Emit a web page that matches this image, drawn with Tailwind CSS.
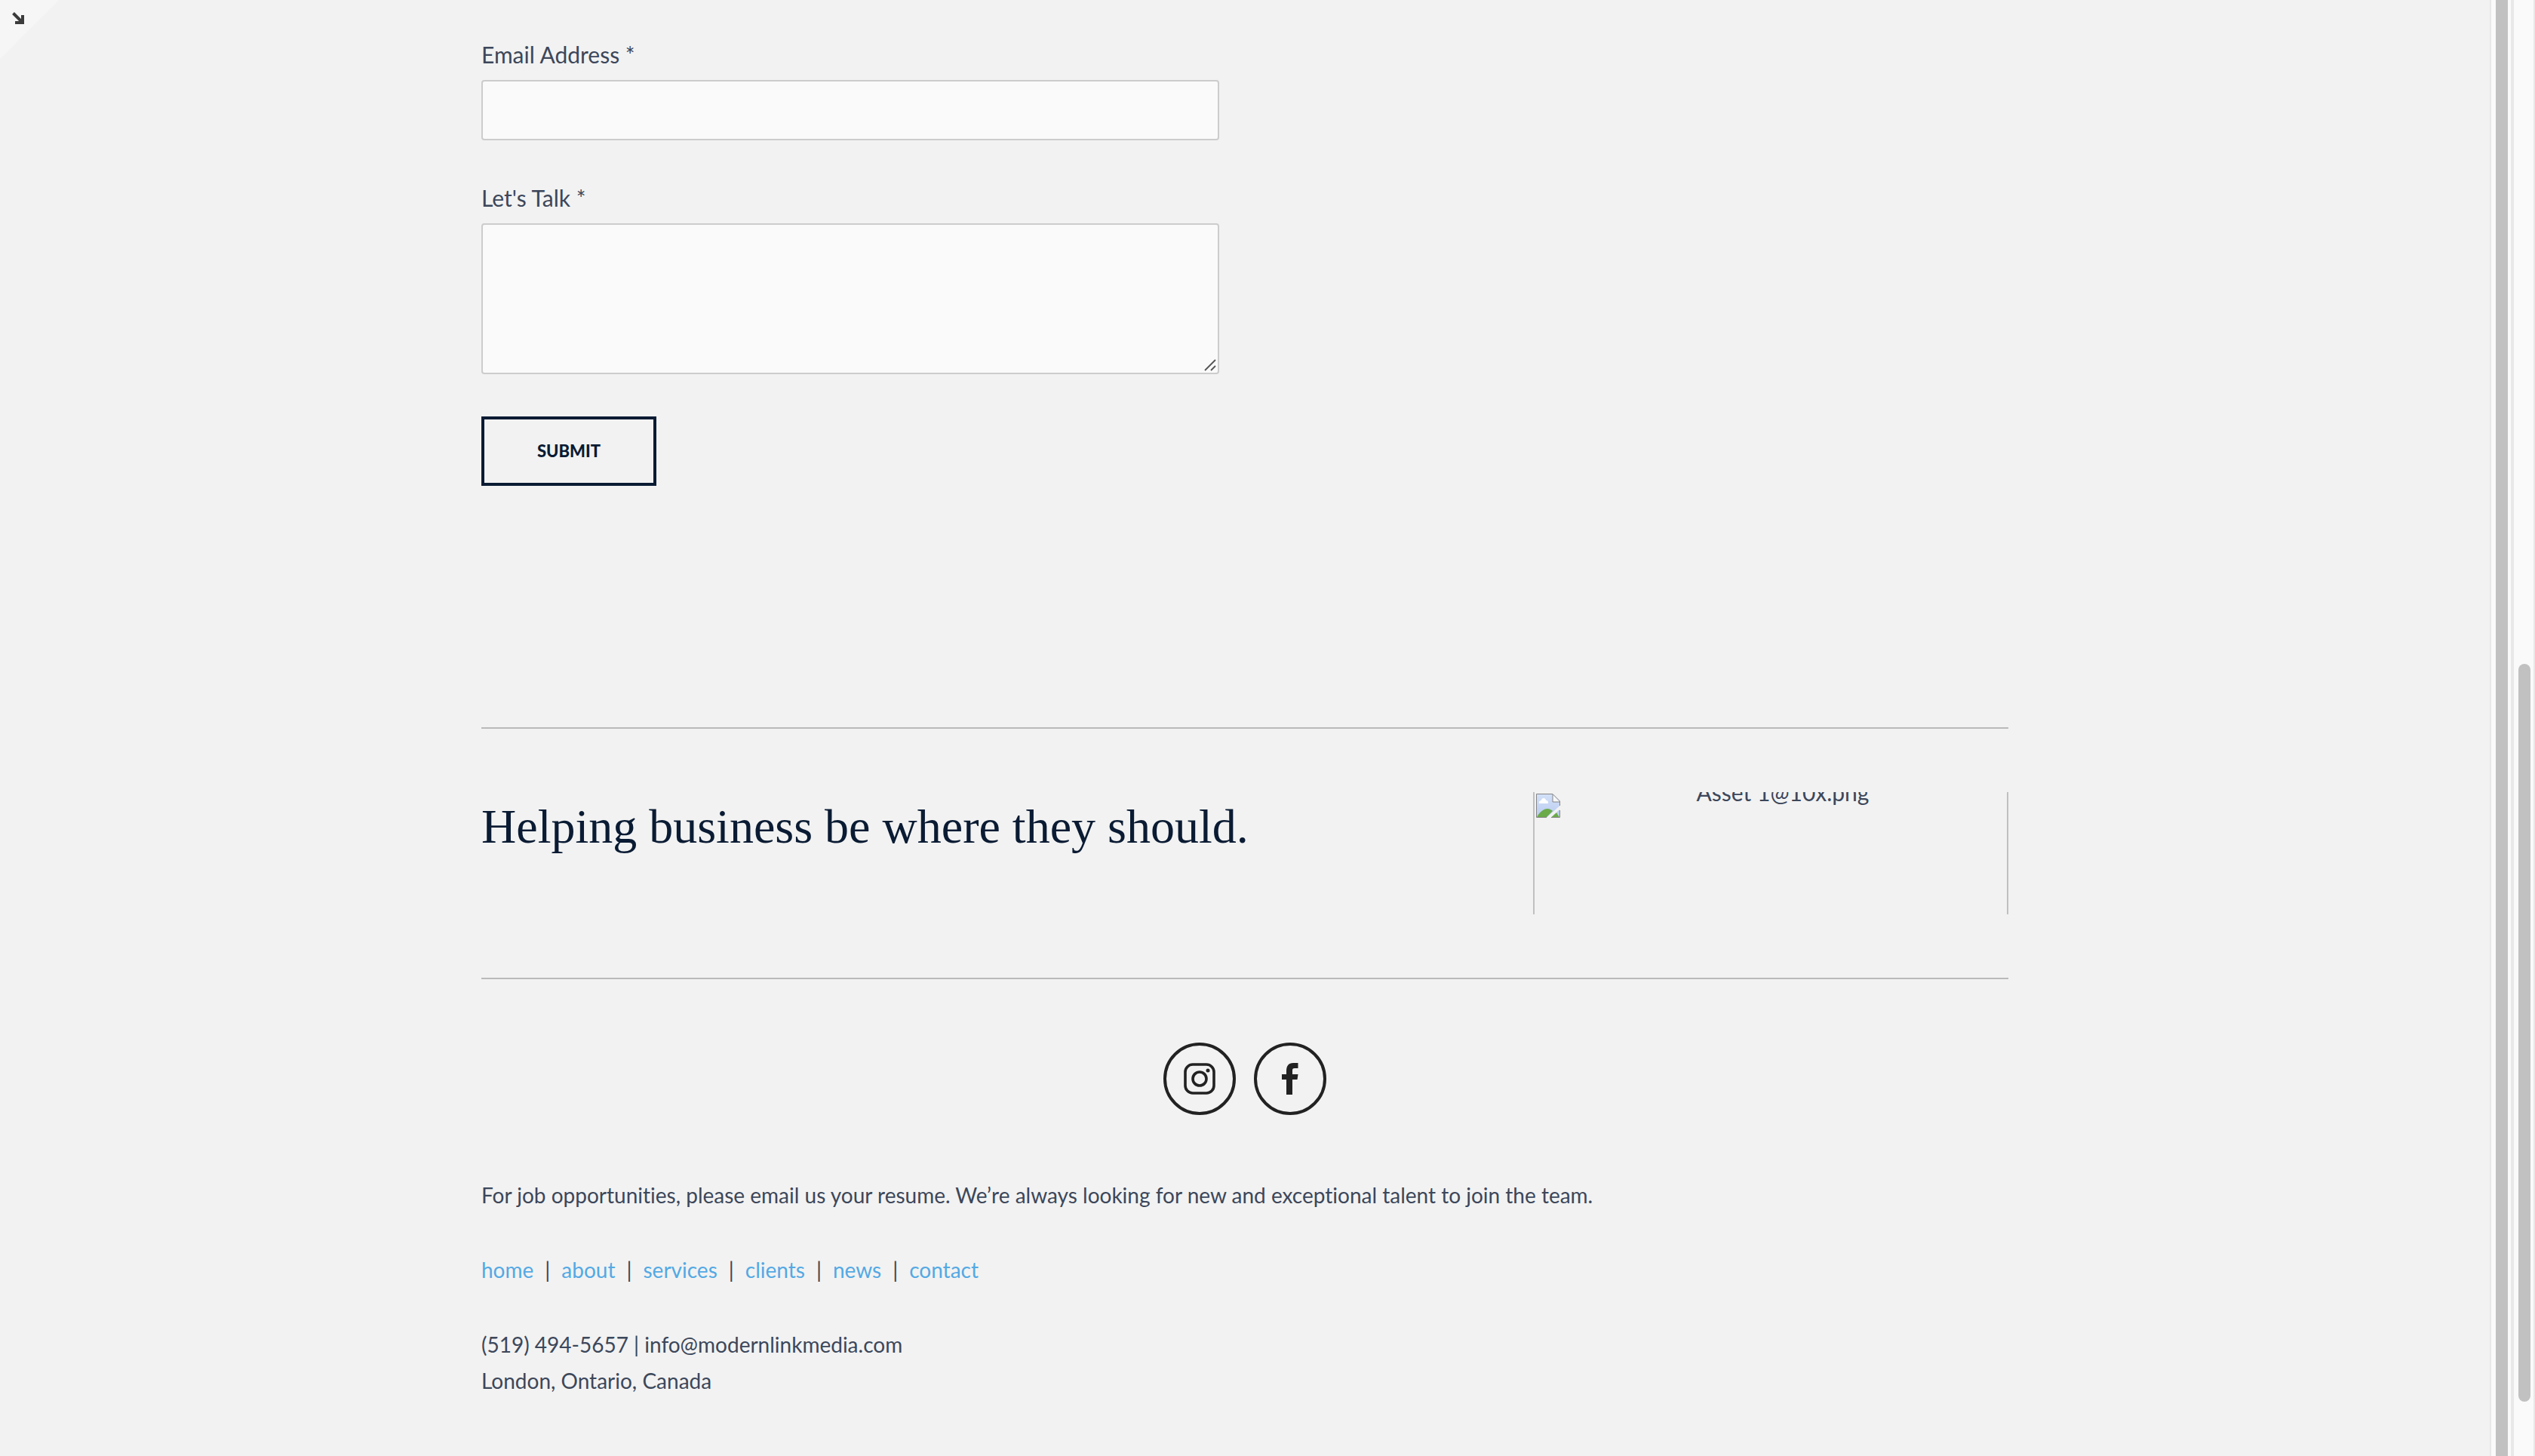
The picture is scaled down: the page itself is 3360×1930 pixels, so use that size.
<!DOCTYPE html>
<html lang="en">
<head>
<meta charset="utf-8">
<title>Modern Link Media</title>
<script src="https://cdn.jsdelivr.net/npm/@tailwindcss/browser@4"></script>
</head>
<body class="flex min-h-screen bg-[#f2f2f2] font-['Lato',sans-serif] text-[30px] leading-[48px] text-[#3c475a] lining-nums [font-variant-ligatures:none]">
  <button type="button" aria-label="Expand" class="absolute top-0 left-0">
    <svg class="block size-[78px]" viewBox="0 0 78 78"><path d="M0 0H78L0 78Z" fill="#f6f6f6"/><path d="M17.500 17.500L29 29M20 30H30V20" fill="none" stroke="#3b3b3b" stroke-width="4"/></svg>
  </button>

  <main class="min-w-0 flex-1 pt-12">
    <div class="mx-auto w-full max-w-[2024px]">
      <form class="w-full max-w-[978px]">
        <label for="email" class="block">Email Address *</label>
        <input id="email" type="email" class="mt-[10px] block h-20 w-full rounded-[4px] border-2 border-[#ccc] bg-[#fafafa] px-6">
        <label for="talk" class="mt-[52px] block">Let's Talk *</label>
        <div class="relative mt-[10px]">
          <textarea id="talk" class="block h-[200px] w-full resize-none rounded-[4px] border-2 border-[#ccc] bg-[#fafafa] px-6"></textarea>
          <svg class="pointer-events-none absolute right-1 bottom-1 h-4 w-4" viewBox="0 0 16 16" fill="none" stroke="#555" stroke-width="1.800"><path d="M1 15L15 1M9 15L15 9"/></svg>
        </div>
        <button type="button" class="mt-14 block h-[92px] w-[232px] border-4 border-[#0a1b33] text-[22px] font-black text-[#0a1b33]">SUBMIT</button>
      </form>

      <section class="mt-80 flex items-start justify-between border-y-2 border-[#bababa] py-[84px]">
        <h2 class="pt-1.5 font-['Liberation_Serif',serif] text-[64px] leading-[80px] text-[#0a1b33]">Helping business be where they should.</h2>
        <div class="relative h-[162px] w-[630px] overflow-hidden border-x-2 border-[#c0c0c0]">
          <svg class="absolute top-0.5 left-0.5 h-8 w-8" viewBox="0 0 32 32">
            <defs><linearGradient id="sky" x2="0" y2="1"><stop stop-color="#d3e1f9"/><stop offset="1" stop-color="#b9cbee"/></linearGradient></defs>
            <path d="M.5.5H22L31.500 10V16L14 31.500H.5Z" fill="url(#sky)"/>
            <path d="M22 1V11H31Z" fill="#f7f7f7"/>
            <path d="M4 13C3 10 6 9 7 9C7 5 13 5 13 9C16 9 16 11 16 13Z" fill="#fff"/>
            <path d="M1 31C5 24 10 20 15 20C18 20 21 22 22 23L14 31Z" fill="#6cab4a"/>
            <path d="M20.500 31L27 25L31 31Z" fill="#6cab4a"/><path d="M27 25L31 21V31Z" fill="#b9cbee"/>
            <path d="M14 31.500H.5V.5H22L31.500 10V16M22 1V11H31M31.500 22V31.500H20" fill="none" stroke="#858585"/>
          </svg>
          <p class="-mt-6 pl-8 text-center">Asset 1@10x.png</p>
        </div>
      </section>

      <nav aria-label="Social" class="mt-[84px] flex justify-center gap-6 text-[#222]">
        <a href="#" aria-label="Instagram" class="flex size-24 items-center justify-center rounded-full border-4 border-[#222]">
          <svg class="size-[42px]" viewBox="0 0 42 42" fill="none" stroke="currentColor" stroke-width="3.600"><rect x="2" y="2" width="38" height="38" rx="10"/><circle cx="21" cy="21" r="9"/><circle cx="32" cy="10" r="2.500" fill="currentColor" stroke="none"/></svg>
        </a>
        <a href="#" aria-label="Facebook" class="flex size-24 items-center justify-center rounded-full border-4 border-[#222]">
          <svg class="size-[42px]" viewBox="0 0 42 42" fill="currentColor"><path d="M16 42V22H10V15H16V10.500C16 4 19 0 25 0H31.500V7H27C24.500 7 24 8 24 10V15H31.500L30.500 22H24V42Z"/></svg>
        </a>
      </nav>

      <footer class="mt-[82px] text-[28px]">
        <p>For job opportunities, please email us your resume. We’re always looking for new and exceptional talent to join the team.</p>
        <nav aria-label="Footer" class="mt-[51px] flex gap-[15px]">
          <a href="#" class="text-[#53a9e4]">home</a><span>|</span>
          <a href="#" class="text-[#53a9e4]">about</a><span>|</span>
          <a href="#" class="text-[#53a9e4]">services</a><span>|</span>
          <a href="#" class="text-[#53a9e4]">clients</a><span>|</span>
          <a href="#" class="text-[#53a9e4]">news</a><span>|</span>
          <a href="#" class="text-[#53a9e4]">contact</a>
        </nav>
        <p class="mt-[51px]">(519) 494-5657 | info@modernlinkmedia.com</p>
        <p>London, Ontario, Canada</p>
      </footer>
    </div>
  </main>

  <!-- scroll tracks: inner frame, then window -->
  <div class="flex w-[30px] shrink-0 border-r-2 border-l-2 border-[#e8e8e8] bg-[#fafafa] pr-1 pl-[6px]"><div class="w-4 bg-[#c1c1c1]"></div></div>
  <div class="w-[30px] shrink-0 border-r-2 border-l-2 border-[#e8e8e8] bg-[#fafafa] pt-[880px] pl-[6px]"><div class="h-[978px] w-4 rounded-full bg-[#c1c1c1]"></div></div>
</body>
</html>
